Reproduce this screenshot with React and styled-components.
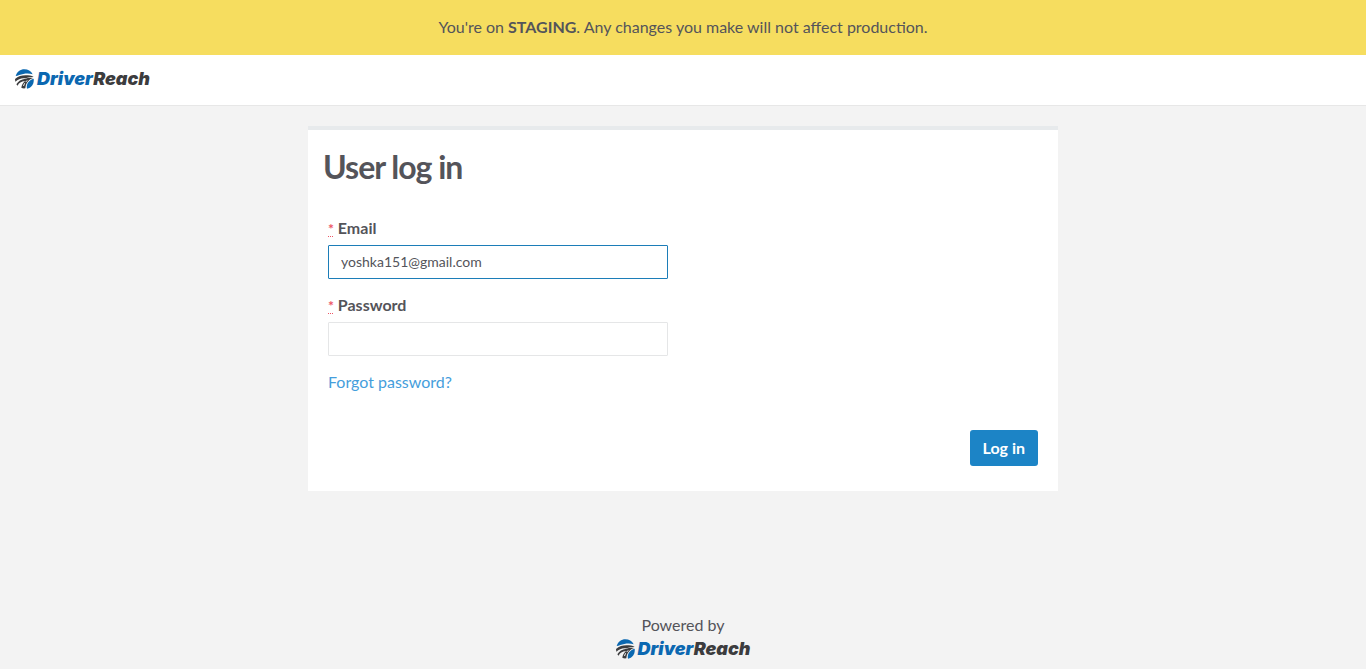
import React, { useState } from "react";
import styled, { createGlobalStyle } from "styled-components";

const GlobalStyle = createGlobalStyle`
  *, *::before, *::after { box-sizing: border-box; }
  body {
    margin: 0;
    background: #f3f3f3;
    color: #54545a;
    font: 16px/24px Lato, "Liberation Sans", sans-serif;
  }
`;

const Page = styled.div`
  display: flex;
  flex-direction: column;
  min-height: 100vh;
`;

const Banner = styled.div`
  padding: 15px 20px 16px;
  background: #f6dd5f;
  text-align: center;
`;

const Header = styled.header`
  display: flex;
  align-items: center;
  height: 51px;
  padding: 0 15px 2px;
  background: #fff;
  border-bottom: 1px solid #e7e7e7;
`;

const Brand = styled.a`
  display: inline-flex;
  align-items: center;
  gap: 3px;
  height: 20px;
  color: #3c3c3e;
  font: italic 900 18px/20px Inter, "Liberation Sans", sans-serif;
  text-decoration: none;

  svg { display: block; flex: none; }
`;

const BrandAccent = styled.span`
  color: #0b68b1;
`;

const Main = styled.main`
  width: 100%;
  max-width: 750px;
  margin: 20px auto;
`;

const Card = styled.form`
  padding: 20px 20px 25px;
  background: #fff;
  border-top: 4px solid #e7eaec;
`;

const Title = styled.h1`
  margin: 0 -5px 32px;
  font-size: 32px;
  line-height: 34px;
  font-weight: 700;
  letter-spacing: -1px;
`;

const Field = styled.div`
  max-width: 340px;
  margin-bottom: 14px;
`;

const Label = styled.label`
  display: block;
  margin-bottom: 5px;
  font-weight: 700;
`;

const Required = styled.abbr`
  color: #ed5565;
  font-size: 14px;
  line-height: 16px;
  text-decoration: underline dotted 1px;
  text-underline-offset: 2px;
`;

const Input = styled.input`
  display: block;
  width: 100%;
  height: 34px;
  padding: 5px 12px 7px;
  border: 1px solid #e5e6e7;
  border-radius: 1px;
  background: #fff;
  color: inherit;
  font: 14px/20px Lato, "Liberation Sans", sans-serif;
  outline: none;

  &:focus { border-color: #1c7db8; }
`;

const TextLink = styled.a`
  color: #459edc;
  text-decoration: none;
`;

const Actions = styled.div`
  display: flex;
  justify-content: flex-end;
  margin-top: 36px;
`;

const Button = styled.button`
  height: 36px;
  padding: 0 13px;
  border: 0;
  border-radius: 3px;
  background: #1c84c6;
  color: #fff;
  font: 700 16px/24px Lato, "Liberation Sans", sans-serif;
  cursor: pointer;
`;

const Footer = styled.footer`
  display: flex;
  flex-direction: column;
  align-items: center;
  gap: 2px;
  margin-top: auto;
  padding-bottom: 10px;
`;

function Logo() {
  return (
    <Brand href="#" aria-label="DriverReach">
      <svg width="19" height="20" viewBox="0 0 57 60" aria-hidden="true">
        <path d="M2 21C6 8 16 1 28 1c11 0 20 5 25 15-9-3-19-3-28-1-9 2-16 5-23 6Z" fill="#0b68b1" />
        <path d="M0 30C9 22 20 19 32 19c9 0 18 1 24 5-9 0-17 1-25 4C20 26 10 30 1 38Z" fill="#3c3c3e" />
        <path d="M4 46C10 36 18 31 31 29c8-3 16-4 24-2-13 4-22 13-24 31-4 1-9 0-12-2 1-8 5-14 11-20-11 1-19 6-22 14Z" fill="#3c3c3e" />
        <path d="M24 50l4-8 2 1-3 8Z M31 38l6-5 1 1-5 6Z" fill="#fff" />
        <path d="M56 29c2 15-6 27-20 30-3-13 4-25 20-30Z" fill="#0b68b1" />
      </svg>
      <span><BrandAccent>Driver</BrandAccent>Reach</span>
    </Brand>
  );
}

export default function App() {
  const [email, setEmail] = useState("yoshka151@gmail.com");
  const [password, setPassword] = useState("");
  return (
    <Page>
      <GlobalStyle />
      <Banner>
        You're on <strong>STAGING</strong>. Any changes you make will not affect production.
      </Banner>
      <Header><Logo /></Header>
      <Main>
        <Card onSubmit={(e) => e.preventDefault()}>
          <Title>User log in</Title>
          <Field>
            <Label htmlFor="email"><Required title="required">*</Required> Email</Label>
            <Input id="email" type="text" inputMode="email" autoFocus value={email} onChange={(e) => setEmail(e.target.value)} />
          </Field>
          <Field>
            <Label htmlFor="password"><Required title="required">*</Required> Password</Label>
            <Input id="password" type="password" value={password} onChange={(e) => setPassword(e.target.value)} />
          </Field>
          <TextLink href="#">Forgot password?</TextLink>
          <Actions><Button type="submit">Log in</Button></Actions>
        </Card>
      </Main>
      <Footer>
        <span>Powered by</span>
        <Logo />
      </Footer>
    </Page>
  );
}
